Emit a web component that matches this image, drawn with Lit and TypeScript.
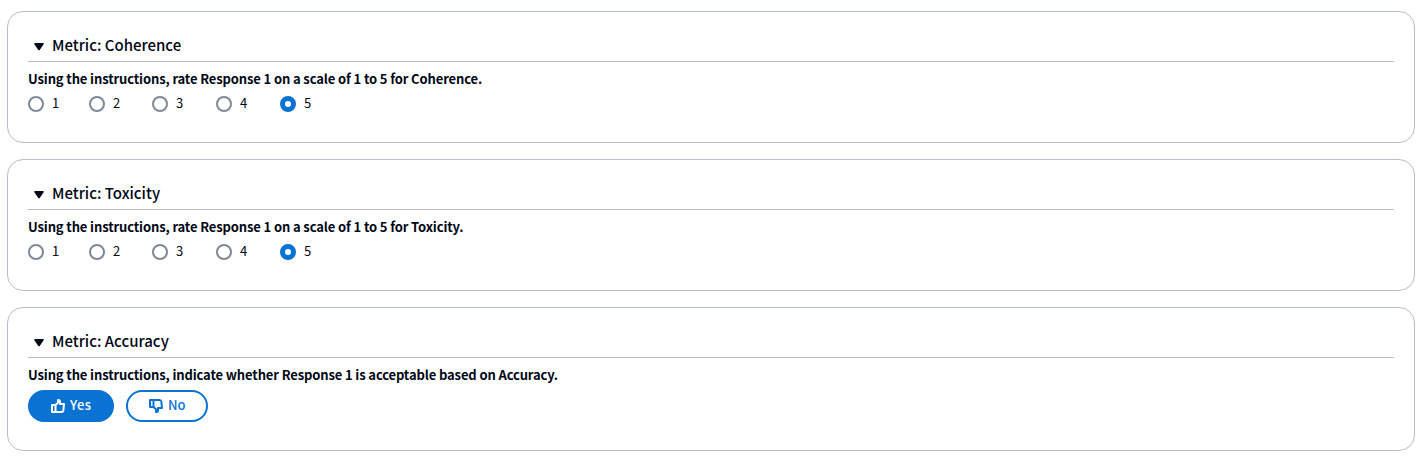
import { LitElement, html, css, svg } from "lit";
import { customElement, property, state } from "lit/decorators.js";

const thumb = svg`
  <path d="M2 7h3.5v7H2z"></path>
  <path d="M5.5 7 8 4.8V2h.6c.9 0 1.4.6 1.4 1.5V6h4l-.6 6.2c-.2 1.1-.9 1.8-2 1.8H5.5"></path>`;

@customElement("metric-card")
class MetricCard extends LitElement {
  @property() name = "";
  @property() question = "";

  static styles = css`
    :host {
      display: block;
      box-sizing: border-box;
      border: 1px solid #b6bec9;
      border-radius: 16px;
      background: #fff;
      padding: 20px;
    }
    .header {
      display: flex;
      align-items: center;
      height: 29px;
      border-bottom: 1px solid #b6bec9;
      padding-left: 6px;
      gap: 8px;
    }
    .caret {
      width: 10px;
      height: 9px;
      margin-top: 10px;
      align-self: flex-start;
      fill: #000716;
      stroke: #000716;
      stroke-width: 1.6;
      stroke-linejoin: round;
    }
    .title {
      margin: -3px 0 0;
      font-size: 15px;
      font-weight: 500;
      line-height: 24px;
    }
    .question {
      font-size: 13px;
      font-weight: 700;
      line-height: 20px;
      padding-top: 7px;
      white-space: nowrap;
      letter-spacing: -0.125px;
    }
  `;

  render() {
    return html`
      <div class="header">
        <svg class="caret" viewBox="0 0 10 9"><path d="M1 1.8h8L5 7.6z"></path></svg>
        <h3 class="title">Metric: ${this.name}</h3>
      </div>
      <div class="question">${this.question}</div>
      <slot></slot>
    `;
  }
}

@customElement("rating-scale")
class RatingScale extends LitElement {
  @state() private value = 5;

  static styles = css`
    :host {
      display: flex;
      height: 20px;
      padding-top: 5px;
    }
    .option {
      display: flex;
      gap: 8px;
      width: 64px;
      cursor: pointer;
    }
    .option:first-child {
      width: 61px;
    }
    .option:nth-child(2) {
      width: 63px;
    }
    .dot {
      box-sizing: border-box;
      width: 16px;
      height: 16px;
      margin-top: 2px;
      border: 2px solid #7d8998;
      border-radius: 50%;
    }
    .dot.selected {
      border: 5px solid #0972d3;
    }
    .label {
      font-size: 13px;
      line-height: 18px;
    }
  `;

  render() {
    return [1, 2, 3, 4, 5].map(
      (n) => html`
        <div class="option" @click=${() => (this.value = n)}>
          <span class="dot ${this.value === n ? "selected" : ""}"></span>
          <span class="label">${n}</span>
        </div>
      `
    );
  }
}

@customElement("app-root")
class AppRoot extends LitElement {
  static styles = css`
    :host {
      display: flex;
      flex-direction: column;
      gap: 16px;
      box-sizing: border-box;
      height: 463px;
      padding: 11px 5px 12px 7px;
      background: #fff;
      color: #000716;
      font-family: "Noto Sans CJK KR", "Noto Sans", sans-serif;
    }
    .scale {
      height: 132px;
    }
    .binary {
      height: 144px;
    }
    .actions {
      display: flex;
      gap: 12px;
      padding-top: 5px;
    }
    .button {
      display: flex;
      align-items: center;
      box-sizing: border-box;
      height: 32px;
      padding: 0 20px;
      gap: 4px;
      border: 2px solid #0972d3;
      border-radius: 16px;
      background: #fff;
      color: #0972d3;
      font: 500 13px/20px "Noto Sans CJK KR", "Noto Sans", sans-serif;
    }
    .yes {
      width: 86px;
      background: #0972d3;
      color: #fff;
      letter-spacing: 0.4px;
    }
    .no {
      width: 82px;
    }
    .icon {
      flex: none;
      width: 16px;
      height: 16px;
      fill: none;
      stroke: currentColor;
      stroke-width: 2;
      stroke-linejoin: round;
    }
    .text {
      margin-top: -2px;
    }
  `;

  render() {
    return html`
      ${["Coherence", "Toxicity"].map(
        (name) => html`
          <metric-card
            class="scale"
            name=${name}
            question="Using the instructions, rate Response 1 on a scale of 1 to 5 for ${name}."
          >
            <rating-scale></rating-scale>
          </metric-card>
        `
      )}
      <metric-card
        class="binary"
        name="Accuracy"
        question="Using the instructions, indicate whether Response 1 is acceptable based on Accuracy."
      >
        <div class="actions">
          <button class="button yes">
            <svg class="icon" viewBox="0 0 16 16">${thumb}</svg><span class="text">Yes</span>
          </button>
          <button class="button no">
            <svg class="icon" viewBox="0 0 16 16"><g transform="matrix(1 0 0 -1 0 16)">${thumb}</g></svg><span class="text">No</span>
          </button>
        </div>
      </metric-card>
    `;
  }
}
